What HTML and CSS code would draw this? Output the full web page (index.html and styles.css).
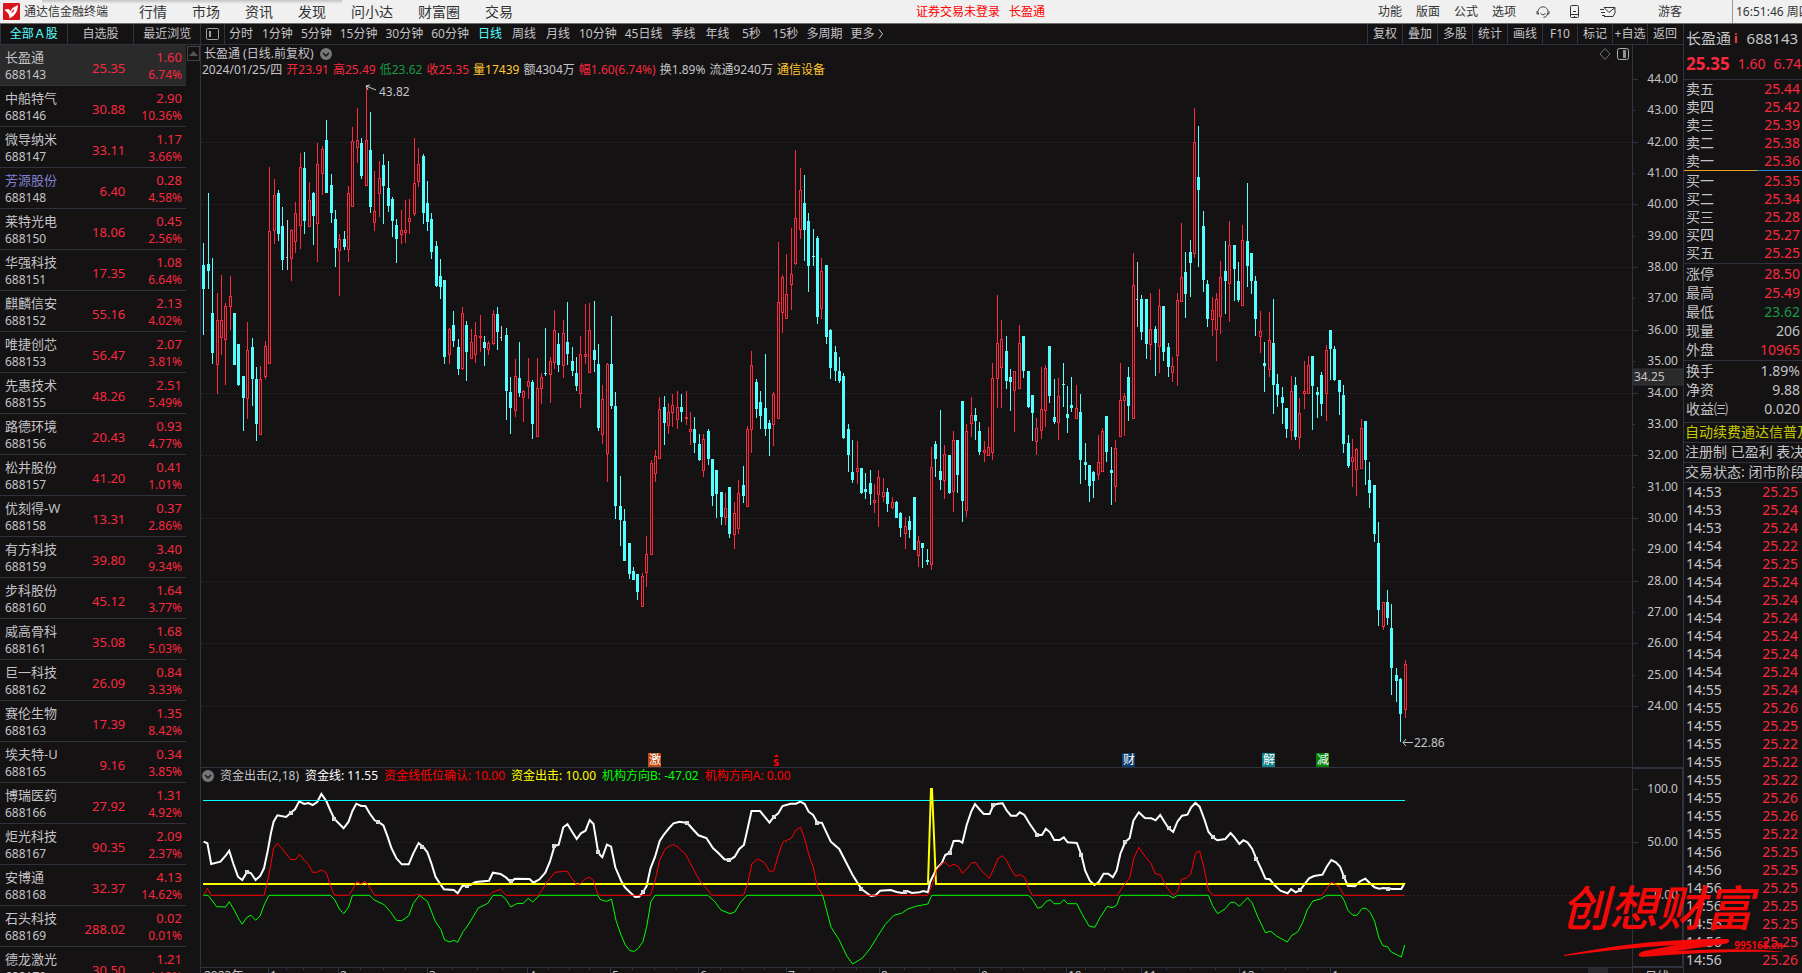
FILE: index.html
```html
<!DOCTYPE html>
<html lang="zh-CN">
<head>
  <meta charset="UTF-8" />
  <meta name="viewport" content="width=device-width, initial-scale=1.0"/>
  <title>通达信金融终端</title>
  <link rel="stylesheet" href="styles.css">
</head>
<body>
  <header class="titlebar">
    <svg class="logo" width="17" height="17" viewBox="0 0 17 17">
      <rect width="17" height="17" rx="1" fill="#d8141c"/>
      <path d="M1.500 7 Q4 5.500 6.500 6.500 L7 8.500 L9.500 5 L15 2 Q14.500 12 6.500 15.500 Q7 11 1.500 7Z" fill="#fff"/>
      <path d="M7.500 10 L11.500 5.500 L10.500 9 Z" fill="#d8141c"/>
    </svg>
    <span class="app-name">通达信金融终端</span>
    <nav class="menu">
      <a href="#">行情</a><a href="#">市场</a><a href="#">资讯</a><a href="#">发现</a><a href="#">问小达</a><a href="#">财富圈</a><a href="#">交易</a>
    </nav>
    <div class="login-state"><span>证券交易未登录</span><span>长盈通</span></div>
    <nav class="tools">
      <a href="#">功能</a><a href="#">版面</a><a href="#">公式</a><a href="#">选项</a>
    </nav>
    <div class="title-icons">
      <svg width="14" height="14" viewBox="0 0 14 14" fill="none" stroke="#444">
        <path d="M2.500 9 A5 5 0 1 1 11.500 9"/><path d="M1 6v3h2M13 6v3h-2M4.500 8.500q2.500 3 5 0M11.500 9q-1 3.500-4 3.500"/>
      </svg>
      <svg width="10" height="14" viewBox="0 0 10 14" fill="none" stroke="#333">
        <rect x="0.500" y="0.500" width="8" height="12" rx="1"/><path d="M1 9.500h7M3 6.500h3M4 11.500h1"/>
      </svg>
      <svg width="16" height="12" viewBox="0 0 16 12" fill="none" stroke="#333">
        <path d="M4 1.500h11v5.500l-2 3.500h-9M4 1.500l5 5 6-5M0 3.500h4M1 6.500h4M2 9.500h3"/>
      </svg>
    </div>
    <a class="guest" href="#">游客</a>
    <time class="clock">16:51:46 周四</time>
  </header>

  <div class="workspace">
    <aside class="watchlist">
      <div class="tabs">
        <button class="active">全部Ａ股</button><button>自选股</button><button>最近浏览</button>
      </div>
      <div class="list-wrap">
        <table class="quotes"><tbody id="quotes"></tbody></table>
        <div class="scroller">
          <button class="scroll-up" aria-label="向上"><svg width="9" height="5"><path d="M0 5L4.500 0L9 5Z" fill="#555"/></svg></button>
        </div>
      </div>
    </aside>

    <main class="chart">
      <div class="toolbar">
        <button class="split" aria-label="侧栏">
          <svg width="13" height="12"><rect x="0.500" y="0.500" width="12" height="11" rx="1" fill="none" stroke="#a0a0a4"/><rect x="3" y="3" width="2" height="6" fill="#a0a0a4"/></svg>
        </button>
        <div class="periods">
          <button>分时</button><button>1分钟</button><button>5分钟</button><button>15分钟</button><button>30分钟</button><button>60分钟</button><button class="active">日线</button><button>周线</button><button>月线</button><button>10分钟</button><button>45日线</button><button>季线</button><button>年线</button><button>5秒</button><button>15秒</button><button>多周期</button><button>更多 <svg width="6" height="10"><path d="M1 0.500L4.500 5L1 9.500" fill="none" stroke="#c4c4c8"/></svg></button>
        </div>
        <div class="actions">
          <button>复权</button><button>叠加</button><button>多股</button><button>统计</button><button>画线</button><button>F10</button><button>标记</button><button>+自选</button><button>返回</button>
        </div>
      </div>

      <div class="pane">
        <section class="plot">
          <div class="pane-head">
            <span>长盈通 (日线.前复权)</span>
            <svg width="12" height="12"><circle cx="6" cy="6" r="6" fill="#77777a"/><path d="M3 5L6 8L9 5" fill="none" stroke="#141213" stroke-width="1.500"/></svg>
            <svg class="push" width="12" height="12"><path d="M6 0.500L11 6L6 11.500L1 6Z" fill="none" stroke="#77777a"/></svg>
            <svg width="12" height="12"><rect x="0.500" y="0.500" width="11" height="11" rx="2" fill="none" stroke="#b0b0b4"/><rect x="6" y="2" width="3" height="8" fill="#909094"/></svg>
          </div>
          <div class="ohlc">
            <span>2024/01/25/四</span><span class="up">开23.91</span><span class="up">高25.49</span><span class="down">低23.62</span><span class="up">收25.35</span><span class="gold">量17439</span><span>额4304万</span><span class="up">幅1.60(6.74%)</span><span>换1.89%</span><span>流通9240万</span><span class="gold">通信设备</span>
          </div>
          <svg class="candles" id="candles"></svg>
        </section>
        <svg class="price-axis" id="priceAxis"></svg>
      </div>

      <div class="pane">
        <section class="plot">
          <div class="indicator-head">
            <svg width="12" height="12"><circle cx="6" cy="6" r="6" fill="#77777a"/><path d="M3 5L6 8L9 5" fill="none" stroke="#141213" stroke-width="1.500"/></svg>
            <span>资金出击(2,18)</span><span class="c-white">资金线: 11.55</span><span class="c-red">资金线低位确认: 10.00</span><span class="c-yellow">资金出击: 10.00</span><span class="c-green">机构方向B: -47.02</span><span class="c-red">机构方向A: 0.00</span>
          </div>
          <svg class="indicator" id="indicator"></svg>
        </section>
        <svg class="value-axis" id="valueAxis"></svg>
      </div>

      <div class="pane time-row">
        <svg class="time-axis" id="timeAxis"></svg>
        <span class="time-unit">日线</span>
      </div>
    </main>

    <aside class="detail">
      <div class="stock"><span>长盈通</span><i>i</i><span>688143</span></div>
      <div class="last"><b>25.35</b><span>1.60</span><span>6.74%</span></div>
      <table class="book"><tbody id="asks"></tbody></table>
      <div class="ratio"></div>
      <table class="book"><tbody id="bids"></tbody></table>
      <table class="stats"><tbody id="stats"></tbody></table>
      <table class="stats"><tbody id="ratios"></tbody></table>
      <p class="note promo">自动续费通达信普及版</p>
      <p class="note">注册制 已盈利 表决权</p>
      <p class="note">交易状态: 闭市阶段</p>
      <table class="ticks"><tbody id="ticks"></tbody></table>
    </aside>
  </div>

  <div class="watermark">
    <span class="brand">创想财富</span>
    <svg class="swoosh" width="230" height="22" viewBox="0 0 230 22">
      <path d="M0 18 C50 9 90 2 164 2 Q168 5 160 7 L112 14 Q180 10 220 15 Q150 14 78 20 Q70 18 80 14 L112 8 Q60 11 0 19 Z" fill="#f40808"/>
    </svg>
    <span class="site">995168.cn</span>
  </div>

  <script src="script.js"></script>
</body>
</html>
```
FILE: styles.css
```css
* {
  box-sizing: border-box;
}
body {
  margin: 0;
  height: 100vh;
  overflow: hidden;
  display: flex;
  flex-direction: column;
  background: #141213;
  color: #c4c4c8;
  font: 12px/16px "Noto Sans", "Noto Sans CJK SC", sans-serif;
  white-space: nowrap;
}
button {
  padding: 0;
  border: 0;
  background: none;
  color: inherit;
  font: inherit;
  white-space: nowrap;
}
a {
  color: inherit;
  text-decoration: none;
}
svg {
  display: block;
  flex: none;
}
table {
  border-collapse: separate;
  border-spacing: 0;
}
td, th {
  padding: 0;
  font-weight: normal;
  text-align: left;
}

/* title bar */
.titlebar {
  display: flex;
  align-items: center;
  flex: none;
  height: 24px;
  padding-left: 3px;
  background: linear-gradient(#c4c4c4, #f0f0f0) 42px 0 / 300px 4px no-repeat #f0f0f0;
  border-bottom: 1px solid #6c6e6c;
  color: #333;
  overflow: hidden;
}
.app-name {
  margin-left: 4px;
}
.menu {
  display: flex;
  gap: 25px;
  margin-left: 31px;
  font-size: 14px;
}
.login-state {
  display: flex;
  gap: 9px;
  margin-left: auto;
  color: #f00;
}
.tools {
  display: flex;
  gap: 14px;
  margin-left: 333px;
}
.title-icons {
  display: flex;
  align-items: center;
  gap: 20px;
  margin-left: 20px;
}
.guest {
  margin-left: 42px;
}
.clock {
  width: 70px;
  height: 24px;
  margin-left: 50px;
  padding-left: 3px;
  border-left: 1px solid #999;
  line-height: 23px;
  overflow: hidden;
}

.workspace {
  display: flex;
  flex: 1;
  min-height: 0;
}

/* left list */
.watchlist {
  width: 201px;
  flex: none;
  border-right: 1px solid #30323e;
  overflow: hidden;
}
.tabs {
  display: flex;
  height: 21px;
  border-bottom: 1px solid #30323e;
}
.tabs button {
  flex: 1;
  border-left: 1px solid #30323e;
}
.tabs .active, .periods .active {
  color: #54ffff;
}
.list-wrap {
  display: flex;
}
.quotes {
  width: 186px;
  color: #f9293f;
}
.quotes tr {
  height: 41px;
}
.quotes th, .quotes td {
  padding-top: 1px;
  border-bottom: 1px solid #30323e;
}
.quotes tr:first-child {
  background: #2a2a2a;
}
.quotes th {
  width: 70px;
  padding-left: 5px;
  color: #c4c4c8;
}
.quotes td {
  font-size: 13px;
  text-align: right;
}
.quotes td:last-child {
  padding-right: 4px;
}
.quotes td:nth-child(2) {
  padding-top: 5px;
}
.quotes span, .quotes small {
  display: block;
  font-size: 13px;
  line-height: 18px;
}
.quotes small {
  font-size: 12px;
}
.quotes .muted {
  color: #8080d0;
}
.scroller {
  flex: 1;
  padding: 1px 0 0 1px;
}
.scroll-up {
  display: grid;
  place-items: center;
  width: 13px;
  height: 15px;
  border: 1px solid #444;
}

/* chart */
.chart {
  flex: 1;
  min-width: 0;
  display: flex;
  flex-direction: column;
}
.toolbar {
  display: flex;
  flex: none;
  height: 21px;
  border-bottom: 1px solid #30323e;
}
.split {
  display: grid;
  place-items: center;
  width: 24px;
  border-right: 1px solid #30323e;
}
.periods {
  display: flex;
  gap: 8px;
  padding-left: 3px;
}
.periods button {
  min-width: 26px;
}
.periods svg {
  display: inline-block;
  vertical-align: -1px;
}
.actions {
  display: flex;
  margin-left: auto;
  padding-right: 1px;
}
.actions button {
  width: 35px;
  border-left: 1px solid #30323e;
}
.pane {
  display: flex;
  flex: none;
  border-bottom: 1px solid #30323e;
}
.plot {
  flex: 1;
  min-width: 0;
}
.pane-head, .ohlc, .indicator-head {
  display: flex;
  align-items: center;
  height: 16px;
}
.pane-head {
  gap: 6px;
  padding: 2px 3px 0;
}
.push {
  margin-left: auto;
}
.ohlc {
  gap: 4px;
  padding: 1px 0 0 1px;
}
.indicator-head {
  gap: 6px;
  padding-left: 1px;
}
.candles {
  width: 100%;
  height: 690px;
}
.indicator {
  width: 100%;
  height: 183px;
}
.price-axis, .value-axis {
  width: 51px;
  border-left: 1px solid #30323e;
}
.price-axis {
  height: 722px;
}
.value-axis {
  height: 199px;
  border: 1px solid #30323e;
}
.time-row {
  height: 20px;
  border: 0;
}
.time-axis {
  flex: 1;
  height: 20px;
}
.time-unit {
  width: 51px;
  padding: 1px 0 0 12px;
  border-left: 1px solid #30323e;
}
svg text {
  font-size: 12px;
  fill: #c4c4c8;
}
.up {
  color: #f9293f;
}
.down {
  color: #169b46;
}
.gold {
  color: #ffc832;
}
.c-white {
  color: #fff;
}
.c-red {
  color: #f00;
}
.c-yellow {
  color: #ff0;
}
.c-green {
  color: #0f0;
}

/* right panel */
.detail {
  width: 119px;
  flex: none;
  border-left: 1px solid #30323e;
  font-size: 14px;
  overflow: hidden;
}
.detail table {
  width: 100%;
  padding: 0 2px;
}
.detail td {
  text-align: right;
}
.stock {
  display: flex;
  height: 28px;
  padding-left: 2px;
  font-size: 15px;
  line-height: 29px;
}
.stock i {
  margin: 0 9px 0 3px;
  color: #ff4040;
  font: bold 12px/30px "Noto Sans", sans-serif;
}
.last {
  display: flex;
  gap: 8px;
  height: 28px;
  padding-left: 2px;
  border-bottom: 1px solid #30323e;
  color: #f9293f;
  line-height: 23px;
}
.last b {
  font-size: 17px;
}
.book tr, .ticks tr {
  height: 18px;
  line-height: 18px;
}
.ratio {
  height: 1px;
  margin-bottom: 1px;
  background: linear-gradient(to right, #e8a020 62%, #3080e0 62%);
}
.stats {
  margin-top: 1px;
  border-top: 1px solid #30323e;
}
.stats tr {
  height: 19px;
  line-height: 19px;
}
.note {
  height: 20px;
  margin: 0;
  padding-left: 1px;
  border-top: 1px solid #30323e;
  line-height: 18px;
}
.promo {
  margin-top: 4px;
  color: #c8c800;
}
.detail .ticks {
  padding-right: 4px;
  border-top: 1px solid #30323e;
}

/* brand mark over the lower right corner */
.watermark {
  position: absolute;
  right: 19px;
  bottom: 10px;
  width: 222px;
  height: 84px;
  color: #f40808;
}
.brand {
  position: absolute;
  left: 0;
  top: 0;
  font: italic 500 48px/52px "Noto Sans CJK SC", sans-serif;
}
.swoosh {
  position: absolute;
  left: 3px;
  bottom: 4px;
}
.site {
  position: absolute;
  right: 0;
  bottom: 12px;
  font-size: 10px;
  font-weight: bold;
  line-height: 12px;
}
```
FILE: script.js
```js
const quotes = [
  ['长盈通', '688143', '25.35', '1.60', '6.74%'],
  ['中船特气', '688146', '30.88', '2.90', '10.36%'],
  ['微导纳米', '688147', '33.11', '1.17', '3.66%'],
  ['芳源股份', '688148', '6.40', '0.28', '4.58%'],
  ['莱特光电', '688150', '18.06', '0.45', '2.56%'],
  ['华强科技', '688151', '17.35', '1.08', '6.64%'],
  ['麒麟信安', '688152', '55.16', '2.13', '4.02%'],
  ['唯捷创芯', '688153', '56.47', '2.07', '3.81%'],
  ['先惠技术', '688155', '48.26', '2.51', '5.49%'],
  ['路德环境', '688156', '20.43', '0.93', '4.77%'],
  ['松井股份', '688157', '41.20', '0.41', '1.01%'],
  ['优刻得-W', '688158', '13.31', '0.37', '2.86%'],
  ['有方科技', '688159', '39.80', '3.40', '9.34%'],
  ['步科股份', '688160', '45.12', '1.64', '3.77%'],
  ['威高骨科', '688161', '35.08', '1.68', '5.03%'],
  ['巨一科技', '688162', '26.09', '0.84', '3.33%'],
  ['赛伦生物', '688163', '17.39', '1.35', '8.42%'],
  ['埃夫特-U', '688165', '9.16', '0.34', '3.85%'],
  ['博瑞医药', '688166', '27.92', '1.31', '4.92%'],
  ['炬光科技', '688167', '90.35', '2.09', '2.37%'],
  ['安博通', '688168', '32.37', '4.13', '14.62%'],
  ['石头科技', '688169', '288.02', '0.02', '0.01%'],
  ['德龙激光', '688170', '30.50', '1.21', '4.13%']
];

const asks = [['卖五', '25.44'], ['卖四', '25.42'], ['卖三', '25.39'], ['卖二', '25.38'], ['卖一', '25.36']];
const bids = [['买一', '25.35'], ['买二', '25.34'], ['买三', '25.28'], ['买四', '25.27'], ['买五', '25.25']];
const stats = [['涨停', '28.50'], ['最高', '25.49'], ['最低', '23.62', 'down'], ['现量', '206', ''], ['外盘', '10965']];
const ratios = [['换手', '1.89%', ''], ['净资', '9.88', ''], ['收益㈢', '0.020', '']];
const ticks = {
  '14:53': '25 24 24',
  '14:54': '22 25 24 24 24 24 24 24',
  '14:55': '24 26 25 22 22 22 26 26 22',
  '14:56': '25 25 25 25 25 25 26'
};

// one bar per entry: colour (r up, c down, w flat), high, body top, body bottom, low
// heights are in thirds of a pixel from the top of the window
const bars = `
c729 795 866 1005,c579 792 812 866,c774 939 1058 1091,r879 960 1095 1182,r825 960 1013 1065,
r909 918 1020 1155,r828 888 920 990,c939 939 1094 1094,c1032 1032 1155 1158,c1128 1128 1194 1293,
r966 1050 1197 1257,c1014 1041 1137 1218,c1101 1137 1272 1323,r1098 1137 1305 1305,r1023 1038 1131 1137,
r501 693 1092 1092,r537 585 693 732,c570 579 702 723,c621 678 780 810,w660 770 771 810,
r687 690 777 843,r606 639 726 759,r459 501 678 747,c456 504 663 702,r546 600 681 681,
c576 579 648 735,r429 492 672 786,r438 447 522 585,c360 420 579 579,c522 555 639 669,
c630 657 744 801,r702 717 753 888,c693 717 741 750,r558 579 750 786,r381 422 620 620,
r324 420 444 489,c414 429 528 537,r258 420 558 558,c336 450 621 639,r513 633 669 693,
r483 534 582 651,c462 495 558 672,c483 564 618 636,c591 597 663 711,c657 675 717 789,
r630 690 705 732,r600 690 699 729,r597 654 666 702,r414 549 642 648,r444 492 546 561,
c462 468 639 672,c543 609 666 693,c639 657 756 777,c723 738 858 861,c777 828 861 897,
c840 840 1071 1092,r984 987 1065 1092,c933 975 1023 1041,c1017 1041 1107 1125,r921 939 1107 1110,
c963 975 1056 1143,r987 1026 1077 1077,r966 1005 1065 1089,r945 1008 1014 1056,c1008 1026 1044 1098,
r1023 1029 1050 1065,r930 942 1032 1035,c921 942 996 1050,w978 1012 1013 1023,c984 1005 1173 1260,
c1131 1176 1224 1302,r1077 1128 1233 1251,c1026 1134 1179 1191,r1170 1173 1194 1266,r1074 1143 1161 1197,
c1140 1146 1272 1317,r1074 1164 1311 1311,r1119 1131 1167 1212,c984 1119 1122 1128,r1071 1083 1125 1209,
r930 990 1089 1107,c999 1032 1095 1116,r960 999 1098 1134,c906 1026 1062 1095,c1041 1083 1113 1128,
c1071 1119 1158 1173,r1008 1062 1182 1224,r912 1062 1071 1092,r909 990 1119 1119,c903 1050 1080 1116,
c1032 1092 1284 1293,r1155 1197 1305 1332,r1089 1092 1362 1446,c948 1092 1218 1227,c1176 1218 1518 1557,
c1428 1518 1560 1638,c1527 1563 1683 1683,c1629 1629 1722 1737,c1701 1713 1740 1740,c1722 1722 1776 1800,
r1719 1728 1821 1821,r1608 1662 1719 1761,r1380 1389 1665 1665,r1350 1368 1422 1446,r1191 1227 1377 1377,
c1188 1221 1269 1335,r1209 1236 1278 1302,r1182 1215 1239 1281,r1173 1221 1260 1287,c1182 1221 1236 1266,
r1173 1251 1257 1275,r1236 1287 1296 1335,c1251 1287 1329 1359,c1302 1332 1380 1383,r1302 1317 1413 1431,
c1287 1293 1377 1395,c1377 1377 1488 1518,c1410 1410 1482 1554,c1476 1476 1551 1575,r1479 1524 1554 1575,
c1461 1461 1602 1614,r1506 1539 1605 1647,r1440 1479 1587 1602,c1398 1455 1488 1509,r1278 1287 1521 1521,
r1053 1095 1290 1359,c1137 1146 1227 1254,c1173 1206 1248 1287,c1062 1224 1287 1308,c1260 1269 1287 1368,
r1176 1182 1275 1338,r726 906 1256 1256,r825 831 939 999,r762 882 956 956,r684 822 855 930,
r450 654 792 795,r504 570 690 717,c525 609 690 783,c639 663 798 876,c687 768 771 798,
c708 714 951 972,r774 813 927 957,c795 795 1011 1032,c987 990 1104 1137,c1038 1056 1113 1143,
c1071 1113 1143 1149,c1119 1128 1314 1317,c1272 1287 1365 1416,c1320 1416 1440 1449,r1323 1404 1416 1452,
c1404 1404 1479 1482,c1419 1467 1476 1497,c1410 1449 1482 1515,r1452 1500 1509 1539,r1410 1431 1485 1581,
r1434 1476 1491 1506,c1464 1476 1512 1536,r1491 1506 1524 1527,c1503 1506 1554 1554,c1536 1539 1584 1611,
r1551 1578 1602 1647,c1548 1563 1590 1614,c1491 1491 1650 1650,r1608 1623 1668 1701,c1629 1629 1644 1704,
c1647 1680 1686 1695,r1341 1401 1695 1710,c1323 1332 1377 1431,c1230 1413 1440 1470,r1335 1362 1443 1497,
c1365 1365 1479 1482,r1293 1320 1476 1536,c1320 1320 1425 1479,c1203 1203 1503 1566,r1272 1293 1533 1551,
r1191 1245 1272 1311,c1224 1245 1263 1320,c1266 1293 1356 1365,r1323 1350 1359 1386,r1281 1341 1368 1368,
r1089 1134 1359 1380,r885 1029 1137 1224,r960 1017 1104 1224,c1008 1053 1143 1167,c1107 1131 1146 1233,
r1113 1113 1173 1296,r975 1029 1167 1167,c1008 1008 1113 1134,c1113 1113 1221 1224,c1185 1185 1239 1323,
r1254 1284 1326 1365,r1101 1227 1293 1317,r1095 1104 1233 1281,c1038 1038 1188 1209,c1137 1251 1266 1272,
r1134 1188 1269 1320,c1089 1152 1155 1221,c1158 1242 1254 1299,c1131 1215 1224 1236,r1155 1224 1257 1257,
c1182 1236 1380 1452,c1329 1386 1395 1440,c1395 1395 1458 1506,c1413 1416 1443 1494,r1305 1386 1425 1440,
r1284 1293 1416 1416,c1248 1248 1356 1386,c1341 1410 1419 1515,r1320 1344 1461 1506,r1089 1200 1311 1311,
r1179 1188 1203 1308,c1101 1131 1218 1263,r759 855 1256 1256,w786 898 899 981,c885 897 996 1020,
c897 897 1032 1077,r879 987 1035 1080,c978 987 1029 1128,r867 918 1041 1119,c918 918 1056 1083,
c1029 1041 1101 1131,r1071 1098 1119 1146,r879 900 1068 1158,r669 831 906 906,c756 816 882 954,
c720 756 789 891,r324 426 762 774,c378 531 570 801,c633 678 840 876,c840 852 957 981,
r891 930 960 1008,r879 897 990 1083,r783 831 951 1002,c723 813 843 942,r663 735 852 966,
c735 735 807 903,c786 843 900 906,r675 720 917 917,c549 723 798 861,c759 759 843 882,
c828 843 957 1008,r933 993 1011 1059,c1026 1089 1098 1176,r936 1020 1110 1131,c897 1029 1155 1242,
c1122 1152 1185 1221,c1161 1191 1209 1272,c1224 1224 1287 1314,r1128 1173 1293 1320,c1131 1155 1311 1320,
r1194 1239 1314 1347,r1083 1173 1182 1227,r1068 1095 1182 1182,c1068 1068 1158 1290,c1161 1176 1185 1254,
c1116 1125 1212 1248,r1035 1050 1182 1263,c990 990 1047 1140,c1038 1047 1140 1143,c1140 1140 1176 1245,
c1155 1185 1332 1359,c1305 1329 1398 1404,r1317 1371 1386 1461,r1344 1347 1410 1488,r1257 1284 1407 1407,
c1263 1263 1380 1455,c1386 1440 1479 1524,c1455 1455 1602 1626,c1566 1629 1830 1878,r1806 1806 1881 1890,
c1770 1806 1854 1875,c1812 1884 2004 2085,c2004 2025 2043 2106,c2034 2037 2142 2226,r1980 1992 2130 2154`;

// indicator lines, three stretches each, x restarts every 600px
const fund = [
  '532,605 542,610 552,672 576,665 589,648 599,632 610,672 622,710 633,720 646,695 656,700 668,720 680,708 690,685 700,630 708,580 715,545 725,526 748,531 760,518 771,508 782,484 795,492 806,489 817,495 829,486 840,462 853,484 864,513 874,537 887,552 898,565 911,545 921,513 931,491 944,498 955,498 966,520 979,541 989,546 1002,556 1013,590 1023,625 1036,655 1050,673 1068,673 1080,640 1094,609 1106,621 1117,637 1128,672 1138,710 1151,733 1160,748 1186,750 1196,760 1208,738 1230,734 1243,726 1278,722 1288,698 1308,702 1322,712 1335,727 1345,716 1384,717 1394,728 1410,718 1425,698 1437,665 1449,618 1460,614 1472,562 1483,553 1495,575 1507,597 1518,580 1530,572 1541,540 1551,552 1562,628',
  '0,645 6,652 18,614 29,620 40,682 55,722 65,742 78,757 92,771 102,770 112,757 122,738 132,685 144,650 156,603 168,582 180,565 192,550 208,545 228,549 242,567 257,586 278,594 295,624 310,640 325,658 338,661 352,650 364,627 376,615 386,565 396,513 418,513 430,530 443,548 454,531 466,520 477,498 498,491 512,491 524,485 535,492 545,515 557,525 568,548 580,548 592,578 603,605 625,627 640,660 660,705 683,747 708,768 720,766 732,752 760,750 775,756 790,759 803,753 815,759 835,757 845,753 857,757 863,725 880,685 893,670 902,645 914,638 924,603 938,602 947,608 958,556 970,515 980,492 993,510 1003,522 1018,522 1028,495 1040,491 1052,490 1063,512 1074,527 1088,527 1097,517 1109,525 1122,550 1143,585 1155,585 1165,566 1176,577 1187,600 1201,600 1212,592 1222,607 1246,609 1258,645 1268,692 1280,722 1292,735 1303,727 1316,701 1328,701 1340,712 1350,692 1360,641 1373,605 1384,595 1394,542 1408,517 1424,534 1441,535 1452,541 1464,525 1475,545 1486,565 1498,576 1509,545 1521,527 1535,524 1545,502 1556,489 1567,500',
  '12,540 22,575 34,592 45,601 66,597 80,579 90,592 103,612 113,601 124,607 136,626 147,656 160,687 171,716 182,718 195,736 210,752 229,760 238,747 250,757 262,750 275,730 285,715 298,708 320,704 331,680 343,660 355,667 366,680 376,710 386,737 405,739 418,724 432,716 443,728 456,742 468,746 480,744 502,747 526,747 535,729'
];
const dirA = [
  '532,766 542,745 552,766 690,766 697,735 705,690 715,625 725,610 740,630 760,659 773,658 783,643 795,660 806,673 817,697 829,697 840,689 853,699 864,738 874,766 911,766 921,750 932,725 944,732 954,724 966,742 979,766 1080,766 1094,763 1100,766 1278,766 1290,755 1308,748 1322,766 1406,766 1418,748 1430,725 1440,712 1450,697 1482,693 1495,716 1507,735 1518,730 1530,716 1541,712 1551,722 1562,762',
  '0,766 132,766 144,722 156,660 170,627 190,613 205,622 225,645 245,690 265,730 280,747 292,766 375,766 386,730 397,672 412,657 430,668 443,694 454,693 466,645 478,606 500,595 512,570 524,562 535,597 546,645 557,680 568,740 582,766 857,766 868,735 880,690 893,670 903,668 913,679 925,673 937,680 947,700 960,685 970,670 981,667 995,690 1017,715 1030,685 1040,655 1052,647 1063,663 1075,690 1086,709 1096,704 1110,712 1120,745 1130,766 1352,766 1365,742 1384,715 1395,655 1408,622 1425,650 1440,670 1450,700 1466,706 1480,740 1498,766 1509,755 1520,718 1532,714 1544,703 1556,640 1567,633',
  '10,680 22,750 34,766 318,766 330,748 343,727 355,733 366,745 376,766 535,766'
];
const dirB = [
  '532,766 544,766 555,783 566,800 590,801 599,785 612,810 622,833 633,853 645,832 656,826 668,841 680,827 692,790 703,766 864,766 875,780 887,807 898,821 911,802 921,766 966,766 978,780 1004,794 1020,815 1036,841 1050,842 1068,827 1080,790 1096,766 1117,784 1138,845 1152,868 1162,900 1175,906 1186,901 1196,907 1210,875 1225,852 1250,804 1275,790 1288,766 1310,766 1322,778 1335,801 1350,791 1368,790 1380,775 1392,786 1410,766 1562,766',
  '0,778 10,782 18,784 30,777 42,842 55,885 66,915 78,932 90,934 100,925 112,905 122,860 133,785 144,766 282,766 300,785 316,810 340,821 352,816 368,786 384,766 582,766 592,810 604,862 625,900 645,948 660,972 685,955 705,927 725,890 745,854 768,826 788,820 803,808 825,799 857,792 867,766 1120,766 1132,782 1144,805 1155,800 1165,785 1176,779 1187,791 1202,791 1212,779 1222,791 1246,791 1260,823 1278,858 1293,862 1308,830 1326,799 1338,803 1350,796 1360,766 1486,766 1498,774 1509,766 1567,766',
  '22,766 33,797 46,821 66,806 80,787 90,787 103,799 124,773 136,788 150,828 171,878 185,874 200,888 228,906 240,886 255,876 268,848 280,810 295,783 315,777 330,766 368,766 377,782 387,812 400,826 410,826 424,805 434,805 445,818 456,843 468,895 478,917 490,920 500,936 526,951 535,915'
];
const dots = [
  '646,695 760,518 874,537 989,546 1104,621 1220,738 1335,722 1449,618 1564,636',
  '112,757 228,549 338,661 454,531 568,548 683,747 798,756 914,638 1028,495 1143,585 1258,645 1373,605 1486,565',
  '34,592 147,656 262,750 376,710 490,747'
];

const el = id => document.getElementById(id);
const LEFT = 201;
const GRID = '#34353f';
const RED = '#f9293f';
const CYAN = '#54ffff';

el('quotes').innerHTML = quotes.map(([name, code, price, diff, pct]) => `
  <tr><th><span class="${code === '688148' ? 'muted' : ''}">${name}</span><small>${code}</small></th>
  <td>${price}</td><td><span>${diff}</span><small>${pct}</small></td></tr>`).join('');

const pairRows = rows => rows.map(([k, v, cls = 'up']) => `<tr><th>${k}</th><td class="${cls}">${v}</td></tr>`).join('');
el('asks').innerHTML = pairRows(asks);
el('bids').innerHTML = pairRows(bids);
el('stats').innerHTML = pairRows(stats);
el('ratios').innerHTML = pairRows(ratios);
el('ticks').innerHTML = Object.entries(ticks)
  .map(([t, list]) => pairRows(list.split(' ').map(p => [t, '25.' + p]))).join('');

const rect = (x, y, w, h, attrs) => `<rect x="${x}" y="${y}" width="${w}" height="${h}" ${attrs}/>`;
const hline = (y, x1, x2, attrs) => `<line x1="${x1}" x2="${x2}" y1="${y}" y2="${y}" ${attrs}/>`;
const dotted = y => hline(y + 0.5, 1, '100%', `stroke="${GRID}" stroke-dasharray="1 3"`);

// candles
const TOP = 77;
const priceY = p => Math.round(79 + (44 - p) * 31.35);
let out = '';
for (let p = 42; p >= 24; p -= 2) out += dotted(priceY(p) - TOP);
bars.trim().split(',').forEach((s, i) => {
  const kind = s.trim()[0];
  const [high, top, bottom, low] = s.trim().slice(1).split(' ').map(v => Math.round(v / 3) - TOP);
  const x = Math.round(203.4 + i * 4.3836) - LEFT;
  const color = { r: RED, c: CYAN, w: '#c4c4d0' }[kind];
  const fill = `fill="${color}"`;
  if (kind === 'w') {
    out += rect(x, high, 1, low - high, fill) + rect(x - 1, top, 1, 1, fill);
    return;
  }
  out += rect(x, high, 1, top - high, fill) + rect(x, bottom, 1, low - bottom, fill);
  const h = Math.max(bottom - top, 1);
  out += kind === 'r' && h > 2
    ? rect(x - 0.5, top + 0.5, 2, h - 1, `fill="none" stroke="${color}"`)
    : rect(x - 1, top, 3, h, fill);
});
out += `<path d="M175 13L165 9M169 8L165 9L167 13" fill="none" stroke="#c4c4c8"/><text x="178" y="19">43.82</text>`;
out += `<path d="M1212 665.500H1202M1205 662L1202 665.500L1205 669" fill="none" stroke="#c4c4c8"/><text x="1213" y="670">22.86</text>`;
[[447, '激', '#c04810'], [921, '财', '#0c3c6c'], [1061, '解', '#108088'], [1115, '减', '#008000']].forEach(([x, t, bg]) => {
  out += rect(x, 676, 13, 14, `fill="${bg}"`) + `<text x="${x + 1}" y="687" style="fill:#fff">${t}</text>`;
});
out += `<path d="M573 680L575.500 677L578 680Z" fill="#f00"/><text x="572" y="689" style="fill:#f00;font-weight:bold">s</text>`;
el('candles').innerHTML = out;

// price axis
out = '';
for (let p = 44; p >= 24; p--) {
  const y = priceY(p) - 45;
  out += hline(y + 0.5, 0, p % 2 ? 2 : 5, `stroke="${GRID}"`) + `<text x="45" y="${y + 4}" text-anchor="end">${p}.00</text>`;
}
out += rect(0, 324, 51, 16, 'fill="#2a2a2a" stroke="#34353f"') + '<text x="1" y="336">34.25</text>';
el('priceAxis').innerHTML = out;

// indicator
const mapPoints = parts => parts.flatMap((part, n) => part.split(' ').map(pt => {
  const [x, y] = pt.split(',').map(Number);
  return [(x + n * 1568) / 2.6133 - LEFT, (y - 432) / 3];
}));
const trace = (parts, color, width) => `<polyline points="${mapPoints(parts).map(p => p.map(v => v.toFixed(1)).join()).join(' ')}" fill="none" stroke="${color}" stroke-width="${width}"/>`;
out = dotted(58) + dotted(111);
out += trace(fund, '#fff', 2);
out += mapPoints(dots).map(([x, y]) => rect(x.toFixed() - 2, y.toFixed() - 2, 4, 4, 'fill="#dcdce4"')).join('');
out += hline(16.5, 2, 1204, 'stroke="#0ff"');
out += '<path d="M2 100H727L730 5L731 5L735 100H1204" fill="none" stroke="#ff0" stroke-width="2"/>';
out += trace(dirA, '#f00', 1) + trace(dirB, '#0f0', 1);
el('indicator').innerHTML = out;

el('valueAxis').innerHTML = [['100.0', 20], ['50.00', 73], ['0.00', 126]].map(([t, y]) =>
  hline(y + 0.5, 0, 5, `stroke="${GRID}"`) + `<text x="45" y="${y + 4}" text-anchor="end">${t}</text>`).join('');

// months
const months = [[268, 1], [338, 2], [427, 3], [527, 4], [610, 5], [698, 6], [786, 7], [879, 8], [979, 9], [1066, 10], [1141, 11], [1239, 12], [1330, 1]];
out = '<text x="3" y="12">2023年</text>' + rect(1387, 0, 20, 20, 'fill="#2a2a2e"');
months.forEach(([x, m], i) => {
  const next = i < 12 ? months[i + 1][0] : x;
  out += rect(x - LEFT, 0, 1, 20, `fill="${GRID}"`) + `<text x="${x - LEFT + 2}" y="12">${m}</text>`;
  for (let q = 1; q < 4 && next > x; q++) out += rect(Math.round(x - LEFT + (next - x) * q / 4), 0, 1, 2, `fill="${GRID}"`);
});
el('timeAxis').innerHTML = out;
```
